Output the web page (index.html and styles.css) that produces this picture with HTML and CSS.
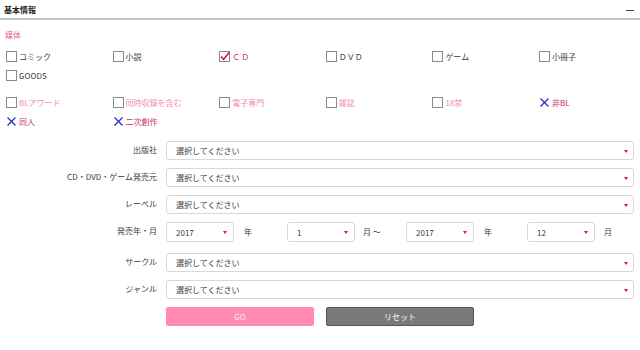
FILE: index.html
```html
<!DOCTYPE html>
<html lang="ja">
<head>
<meta charset="utf-8">
<link rel="stylesheet" href="styles.css">
</head>
<body>
<div class="panel">
  <div class="head">
    <span class="title">基本情報</span>
    <span class="minus"></span>
  </div>
  <div class="sec-label">媒体</div>
  <div class="grid">
    <div class="item"><span class="box"></span>コミック</div>
    <div class="item"><span class="box"></span>小説</div>
    <div class="item on"><svg class="chk" width="11" height="11" viewBox="0 0 11 11"><rect x="0.5" y="0.5" width="10" height="10" fill="#fff" stroke="#8a8a8a"/><path d="M2 5.5 L4.6 8.3 L10.5 1.2" fill="none" stroke="#c41d4e" stroke-width="1.6"/></svg>ＣＤ</div>
    <div class="item"><span class="box"></span>ＤＶＤ</div>
    <div class="item"><span class="box"></span>ゲーム</div>
    <div class="item"><span class="box"></span>小冊子</div>
    <div class="item"><span class="box"></span>GOODS</div>
  </div>
  <div class="grid grid2">
    <div class="item pk"><span class="box"></span>BLアワード</div>
    <div class="item pk"><span class="box"></span>同時収録を含む</div>
    <div class="item pk"><span class="box"></span>電子専門</div>
    <div class="item pk"><span class="box"></span>雑誌</div>
    <div class="item pk"><span class="box"></span>18禁</div>
    <div class="item ex"><svg class="x" width="11" height="11" viewBox="0 0 11 11"><path d="M1.5 1.5 L9.5 9.5 M9.5 1.5 L1.5 9.5" stroke="#1f2bc4" stroke-width="1.2"/></svg>非BL</div>
    <div class="item ex"><svg class="x" width="11" height="11" viewBox="0 0 11 11"><path d="M1.5 1.5 L9.5 9.5 M9.5 1.5 L1.5 9.5" stroke="#1f2bc4" stroke-width="1.2"/></svg>同人</div>
    <div class="item ex"><svg class="x" width="11" height="11" viewBox="0 0 11 11"><path d="M1.5 1.5 L9.5 9.5 M9.5 1.5 L1.5 9.5" stroke="#1f2bc4" stroke-width="1.2"/></svg>二次創作</div>
  </div>
  <div class="form">
    <div class="row"><div class="lbl">出版社</div><div class="sel wide">選択してください<i></i></div></div>
    <div class="row"><div class="lbl">CD・DVD・ゲーム発売元</div><div class="sel wide">選択してください<i></i></div></div>
    <div class="row"><div class="lbl">レーベル</div><div class="sel wide">選択してください<i></i></div></div>
    <div class="row date"><div class="lbl">発売年・月</div>
      <div class="sel sm">2017<i></i></div><span class="unit">年</span>
      <div class="sel sm">1<i></i></div><span class="unit u2">月 ～</span>
      <div class="sel sm">2017<i></i></div><span class="unit">年</span>
      <div class="sel sm">12<i></i></div><span class="unit last">月</span>
    </div>
    <div class="row"><div class="lbl">サークル</div><div class="sel wide">選択してください<i></i></div></div>
    <div class="row"><div class="lbl">ジャンル</div><div class="sel wide">選択してください<i></i></div></div>
    <div class="row btns"><div class="lbl"></div><div class="btn go">GO</div><div class="btn reset">リセット</div></div>
  </div>
</div>
</body>
</html>
```
FILE: styles.css
```css
* { box-sizing: border-box; }
html, body { margin: 0; padding: 0; background: #fff; }
body {
  font-family: "Noto Sans CJK JP", "Noto Sans", sans-serif;
  font-size: 8px;
  color: #3a3a3a;
  width: 640px;
  height: 350px;
  overflow: hidden;
}
.head {
  height: 20px;
  border-bottom: 2px solid #c4c4c4;
  display: flex;
  align-items: center;
  justify-content: space-between;
  padding: 0 6px 0 4px;
}
.title { font-weight: bold; color: #222; }
.minus { width: 8px; height: 1px; background: #444; margin-top: 2px; }
.sec-label {
  color: #e8609a;
  padding: 8px 0 0 5px;
  height: 27px;
  line-height: 14px;
}
.grid {
  display: grid;
  grid-template-columns: repeat(6, 106.6px);
  grid-auto-rows: 19px;
  padding-left: 6px;
}
.grid2 { margin-top: 8px; }
.item { display: flex; align-items: center; color: #3a3a3a; }
.box {
  width: 11px; height: 11px;
  border: 1px solid #8a8a8a;
  background: #fff;
  margin-right: 2px;
  flex: none;
}
.chk, .x { margin-right: 2px; flex: none; }
.item.on { color: #c8346a; letter-spacing: 1px; }
.item.pk { color: #f28bb6; }
.item.ex { color: #c82e68; }
.form { margin-top: 10px; }
.row { display: flex; align-items: center; height: 19px; margin-bottom: 8px; }
.row.date { height: 20px; margin-bottom: 11px; }
.lbl { width: 166px; flex: none; text-align: right; padding-right: 9px; margin-top: -3px; }
.sel {
  position: relative;
  flex: none;
  height: 100%;
  border: 1px solid #d8d8d8;
  border-radius: 3px;
  background: #fff;
  display: flex;
  align-items: center;
  padding-left: 9px;
}
.sel i {
  position: absolute;
  right: 5px; top: 50%;
  margin-top: -1px;
  width: 0; height: 0;
  border-left: 2.5px solid transparent;
  border-right: 2.5px solid transparent;
  border-top: 3px solid #c41d4e;
}
.wide { width: 468px; }
.sm { width: 68px; }
.sm i { right: 6px; }
.unit { flex: none; width: 53px; padding-left: 10px; margin-top: -1px; }
.unit.u2 { width: 51px; padding-left: 8px; }
.unit.last { width: auto; padding-left: 9px; }
.btns { height: 19px; }
.btn {
  flex: none;
  width: 148px; height: 100%;
  border-radius: 2px;
  display: flex; align-items: center; justify-content: center;
  color: #fff;
}
.go { background: #ff8ab3; color: #fde8f0; }
.reset { background: #797979; border: 1px solid #555; margin-left: 12px; }
```
